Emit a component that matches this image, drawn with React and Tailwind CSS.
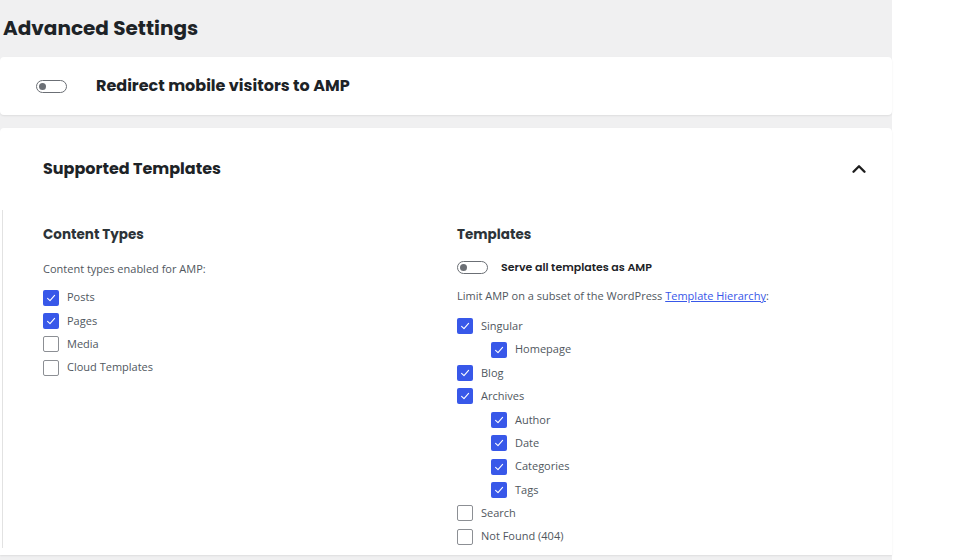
import { ChevronUp } from "lucide-react";

const contentTypes = [
  { label: "Posts", checked: true },
  { label: "Pages", checked: true },
  { label: "Media", checked: false },
  { label: "Cloud Templates", checked: false },
];

const templates = [
  { label: "Singular", checked: true, level: 0 },
  { label: "Homepage", checked: true, level: 1 },
  { label: "Blog", checked: true, level: 0 },
  { label: "Archives", checked: true, level: 0 },
  { label: "Author", checked: true, level: 1 },
  { label: "Date", checked: true, level: 1 },
  { label: "Categories", checked: true, level: 1 },
  { label: "Tags", checked: true, level: 1 },
  { label: "Search", checked: false, level: 0 },
  { label: "Not Found (404)", checked: false, level: 0 },
];

function Checkbox({ checked }) {
  return checked ? (
    <span className="flex h-4 w-4 shrink-0 items-center justify-center rounded-[2px] bg-[#3858e9]">
      <svg width="12" height="12" viewBox="0 0 12 12" fill="none">
        <path d="M2.6 6.4 L5 8.6 L9.6 3.4" stroke="white" strokeWidth="1.1" strokeLinecap="round" strokeLinejoin="round" />
      </svg>
    </span>
  ) : (
    <span className="h-4 w-4 shrink-0 rounded-[2px] border border-[#8c8f94] bg-white" />
  );
}

function Toggle() {
  return (
    <span className="flex h-[13px] w-[31px] shrink-0 items-center rounded-full border-[1.5px] border-[#6b6f75] bg-white px-[2px]">
      <span className="h-[7px] w-[7px] rounded-full bg-[#6b6f75]" />
    </span>
  );
}

export default function App() {
  const heading = { fontFamily: "Poppins, Lato, 'Open Sans', sans-serif" };
  const body = { fontFamily: "'Open Sans', 'Noto Sans', sans-serif" };

  return (
    <div className="h-[560px] w-[892px] bg-[#f0f0f1] text-[#1e1e1e]" style={body}>
      <h1 className="pl-[3px] pt-[14px] text-[20px] font-bold leading-[28px] text-[#1d2327]" style={heading}>
        Advanced Settings
      </h1>

      <div className="mt-[15px] flex h-[58px] items-center rounded-[4px] bg-white pl-[36px] shadow-[0_1px_2px_rgba(0,0,0,0.08)]">
        <Toggle />
        <span className="ml-[29px] text-[16px] font-bold text-[#1d2327]" style={heading}>
          Redirect mobile visitors to AMP
        </span>
      </div>

      <div className="mt-[13px] h-[427px] rounded-t-[4px] bg-white shadow-[0_1px_2px_rgba(0,0,0,0.08)]">
        <div className="flex h-[82px] items-center justify-between pl-[43px] pr-[22px]">
          <h2 className="text-[16px] font-bold text-[#1d2327]" style={heading}>
            Supported Templates
          </h2>
          <ChevronUp size={22} strokeWidth={2.6} className="text-[#1e1e1e]" />
        </div>

        <div className="ml-[2px] grid grid-cols-[414px_1fr] border-l border-[#e2e2e2] pl-[40px] pt-[15px]">
          <div>
            <h3 className="text-[13.5px] font-bold leading-[20px] text-[#2c3338]" style={heading}>
              Content Types
            </h3>
            <p className="mt-[16px] text-[11px] leading-[16px] text-[#50575e]">Content types enabled for AMP:</p>
            <div className="mt-[9px] flex flex-col">
              {contentTypes.map((c) => (
                <label key={c.label} className="flex h-[23.3px] items-center gap-[8px] text-[11px] text-[#50575e]">
                  <Checkbox checked={c.checked} />
                  {c.label}
                </label>
              ))}
            </div>
          </div>

          <div>
            <h3 className="text-[13.5px] font-bold leading-[20px] text-[#2c3338]" style={heading}>
              Templates
            </h3>
            <div className="mt-[14px] flex items-center">
              <Toggle />
              <span className="ml-[13px] text-[11px] font-semibold text-[#1d2327]" style={heading}>
                Serve all templates as AMP
              </span>
            </div>
            <p className="mt-[12px] text-[11px] leading-[16px] text-[#50575e]">
              Limit AMP on a subset of the WordPress{" "}
              <a className="text-[#3858e9] underline">Template Hierarchy</a>:
            </p>
            <div className="mt-[11px] flex flex-col">
              {templates.map((t) => (
                <label
                  key={t.label}
                  className={`flex h-[23.4px] items-center gap-[8px] text-[11px] text-[#50575e] ${t.level ? "pl-[34px]" : ""}`}
                >
                  <Checkbox checked={t.checked} />
                  {t.label}
                </label>
              ))}
            </div>
          </div>
        </div>
      </div>
    </div>
  );
}
